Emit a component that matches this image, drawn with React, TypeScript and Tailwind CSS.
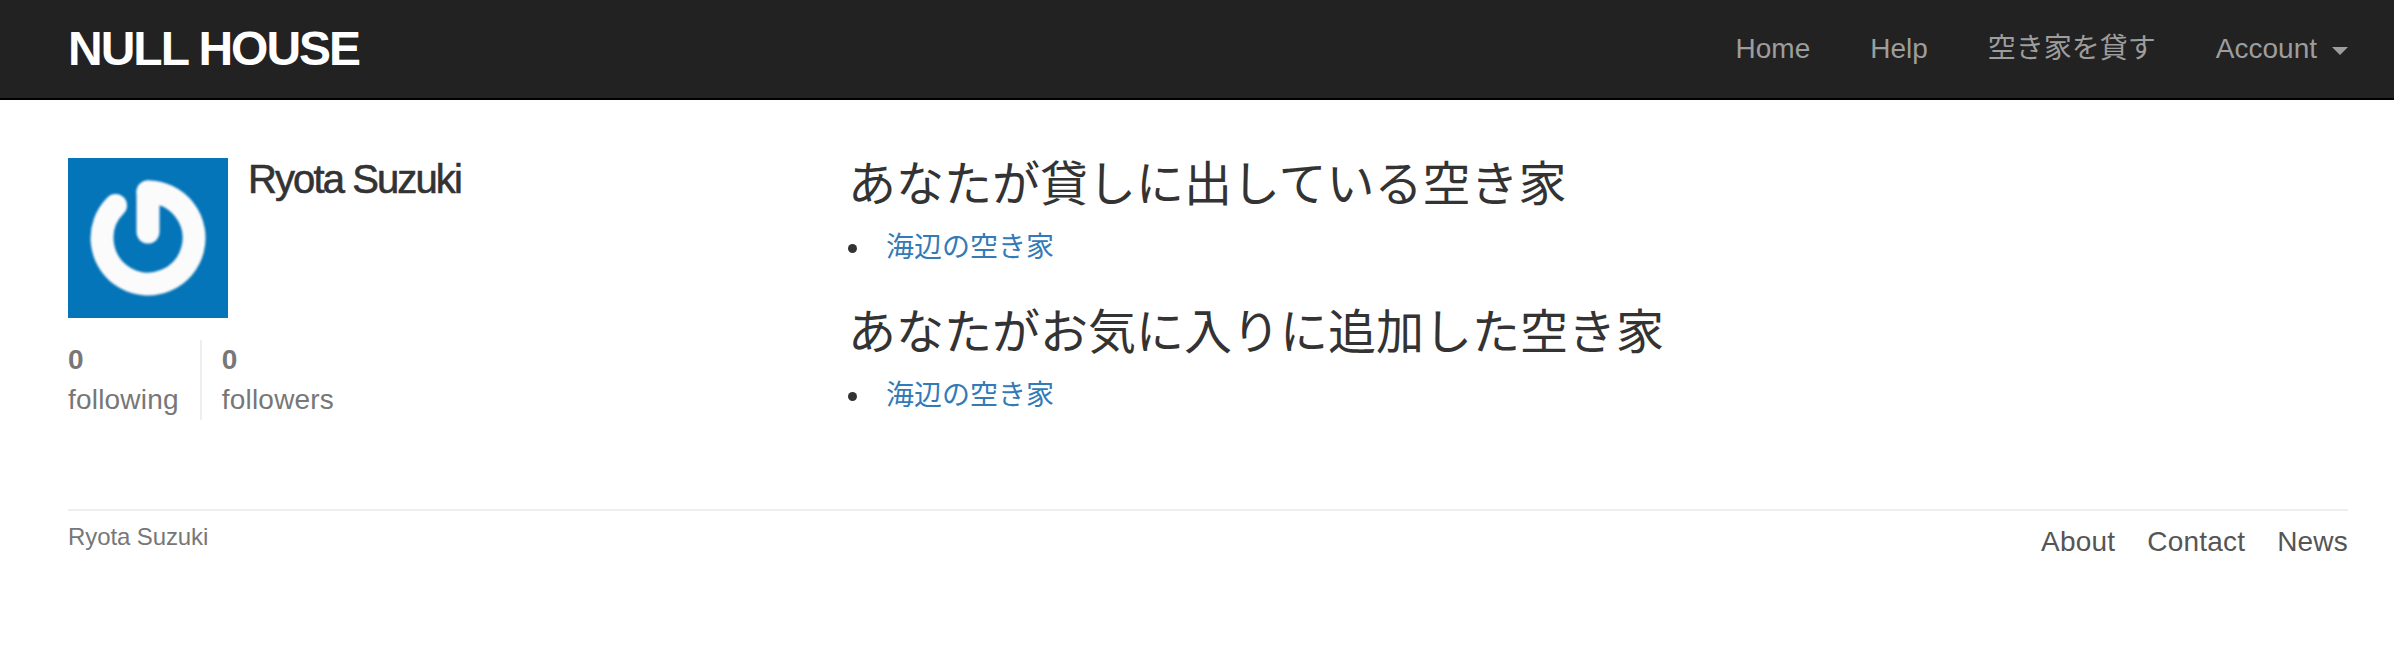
const fontStack = "font-['Liberation_Sans','Noto_Sans_CJK_JP',sans-serif]";

const navLinks = ["Home", "Help", "空き家を貸す"];
const footerLinks = ["About", "Contact", "News"];

function Avatar() {
  return (
    <svg viewBox="0 0 160 160" className="h-40 w-40 shrink-0 bg-[#0575b9]">
      <g fill="none" stroke="#fbfbfb" strokeWidth="23" strokeLinecap="round" className="blur-[0.8px]">
        <path d="M80 34 A46 46 0 1 1 47.5 47.5" />
        <path d="M80 34 V74" />
      </g>
    </svg>
  );
}

function HouseSection({ title }: { title: string }) {
  return (
    <section className="mb-[38px]">
      <h3 className="mb-[17px] text-[48px] leading-[53px] font-normal text-[#333]">{title}</h3>
      <ul className="text-[28px] leading-10 text-[#333]">
        <li className="flex items-center gap-[29px]">
          <span className="h-[9px] w-[9px] rounded-full bg-[#333]" />
          <a href="#" className="text-[#337ab7]">海辺の空き家</a>
        </li>
      </ul>
    </section>
  );
}

export default function App() {
  return (
    <div className={`min-h-[668px] bg-white ${fontStack}`}>
      <header className="flex h-[100px] items-center justify-between border-b-2 border-black bg-[#222] pr-[46px] pl-[68px]">
        <a href="#" className="text-[48px] font-bold tracking-[-2px] text-white">NULL HOUSE</a>
        <nav className="flex items-center gap-[60px] text-[28px] text-[#9d9d9d]">
          {navLinks.map((label) => (
            <a key={label} href="#">{label}</a>
          ))}
          <a href="#" className="flex items-center gap-[15px]">
            Account
            <span className="mt-[3px] border-x-[8px] border-t-[8px] border-x-transparent border-t-[#9d9d9d]" />
          </a>
        </nav>
      </header>

      <div className="pr-[46px] pl-[68px]">
        <main className="flex pt-[58px]">
          <aside className="w-[780px] shrink-0">
            <div className="flex gap-5">
              <Avatar />
              <h1 className="mt-[1px] text-[40px] leading-10 font-normal tracking-[-1.9px] text-[#333] [-webkit-text-stroke:0.6px_#333]">Ryota Suzuki</h1>
            </div>
            <div className="mt-[22px] flex text-[28px] leading-10 tracking-[0.2px] text-[#777]">
              <div className="border-r-2 border-[#eee] pr-[21px]">
                <strong className="block">0</strong>
                following
              </div>
              <div className="pl-5">
                <strong className="block">0</strong>
                followers
              </div>
            </div>
          </aside>
          <div className="flex-1">
            <HouseSection title="あなたが貸しに出している空き家" />
            <HouseSection title="あなたがお気に入りに追加した空き家" />
          </div>
        </main>

        <footer className="mt-[55px] flex justify-between border-t-2 border-[#eee] pt-[10px]">
          <small className="-mt-[1px] text-[24px] leading-[34px] tracking-[-0.1px] text-[#777]">Ryota Suzuki</small>
          <div className="flex gap-[32px] pt-[1px] text-[28px] leading-10 tracking-[0.2px] text-[#555]">
            {footerLinks.map((label) => (
              <a key={label} href="#">{label}</a>
            ))}
          </div>
        </footer>
      </div>
    </div>
  );
}
